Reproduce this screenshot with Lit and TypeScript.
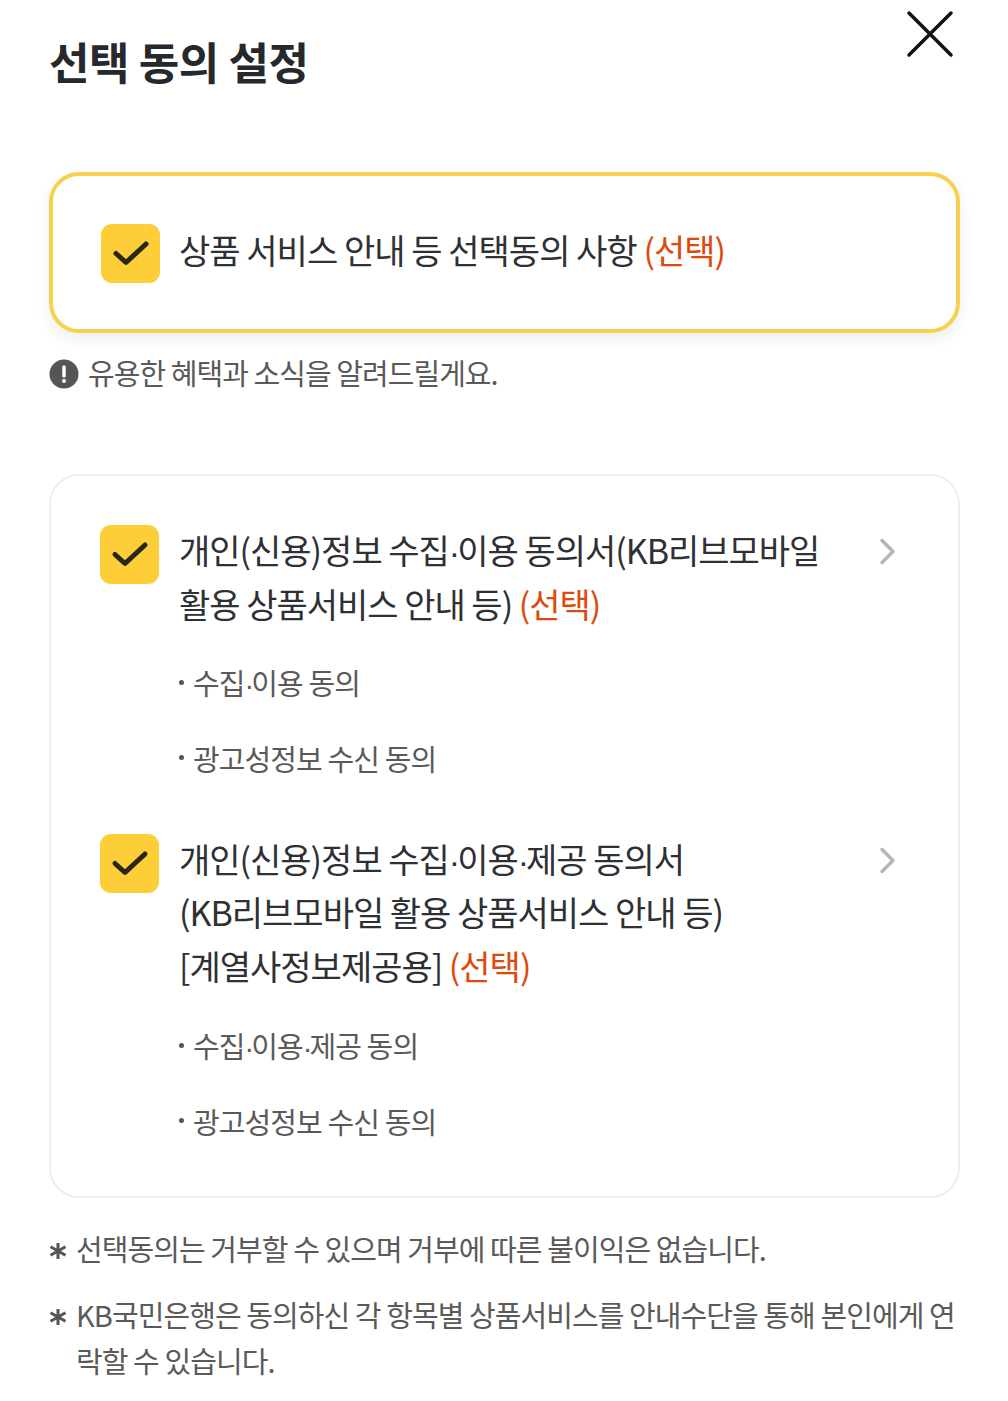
import { LitElement, html, css } from "lit";
import { customElement } from "lit/decorators.js";

const check = html`<span class="box"><svg width="59" height="59" viewBox="0 0 59 59"><path d="M15 29.500 L25 38.500 L45 20" fill="none" stroke="#2a2618" stroke-width="5" stroke-linecap="round" stroke-linejoin="round"/></svg></span>`;
const chev = html`<svg class="chev" width="20" height="30" viewBox="0 0 20 30"><path d="M4 4.500 L15 15.500 L4 26.500" fill="none" stroke="#b5b5b5" stroke-width="3.500" stroke-linecap="round" stroke-linejoin="round"/></svg>`;
const dot = html`<span class="dot">·</span>`;

@customElement("app-root")
export class AppRoot extends LitElement {
  static styles = css`
    :host { display: block; width: 1008px; height: 1401px; background: #fff; overflow: hidden; box-sizing: border-box; padding: 0 48px 0 49px; font-family: "Noto Sans CJK KR", "Noto Sans", sans-serif; color: #26282c; }
    * { box-sizing: border-box; }
    header { display: flex; justify-content: space-between; align-items: flex-start; height: 172px; }
    h1 { margin: 33px 0 0 0; font-size: 44px; line-height: 56px; font-weight: 700; letter-spacing: -0.4px; color: #26282c; }
    .close { display: block; margin: 10px 6px 0 0; }
    .card-top { height: 161px; border: 4px solid #f5d14f; border-radius: 30px; display: flex; align-items: center; padding: 0 0 6px 48px; gap: 19px; box-shadow: 0 6px 16px rgba(0,0,0,.07); }
    .card-top .box { margin-top: 8px; }
    .card-top .label { letter-spacing: -0.96px; }
    .box { flex: none; width: 59px; height: 59px; background: #fdce38; border-radius: 11px; display: block; }
    .box svg { display: block; }
    .label { font-size: 34px; line-height: 54px; letter-spacing: -1px; color: #2e3034; }
    .sel { color: #dd4a0c; }
    .dot { font-family: "Liberation Sans", sans-serif; letter-spacing: -3px; line-height: 0; }
    .notice { display: flex; align-items: center; gap: 9px; margin-top: 13px; height: 52px; font-size: 29px; letter-spacing: -0.95px; color: #5a5a5a; }
    .notice svg { margin-top: 4px; }
    .card { margin-top: 76px; height: 724px; border: 2px solid #eeeeee; border-radius: 30px; padding: 49px 60px 0 49px; }
    .row { display: flex; gap: 20px; align-items: flex-start; }
    .row .label { flex: 1; margin-top: -2px; line-height: 53.6px; }
    .chev { flex: none; margin-top: 11px; }
    ul { list-style: none; margin: 32px 0 0 79px; padding: 0; font-size: 29px; line-height: 40px; letter-spacing: -0.9px; color: #5a5a5a; }
    ul.last { margin-top: 33px; }
    li { display: flex; align-items: center; gap: 9px; height: 40px; margin-bottom: 35.500px; }
    li::before { content: ""; width: 5px; height: 5px; border-radius: 50%; background: #555; flex: none; }
    .row.second { margin-top: 56px; }
    .notes { margin: 27px 0 0 0; padding: 0; list-style: none; font-size: 29px; line-height: 46px; letter-spacing: -0.93px; color: #5a5a5a; }
    .note { display: flex; gap: 9px; margin-bottom: 20px; }
    .star { flex: none; width: 18px; margin-top: 17px; display: block; }
  `;

  render() {
    const star = html`<svg class="star" width="18" height="18" viewBox="0 0 18 18"><path d="M9 1 V17 M1.500 4.700 L16.500 13.300 M16.500 4.700 L1.500 13.300" stroke="#555" stroke-width="3" fill="none"/></svg>`;
    return html`
      <header>
        <h1>선택 동의 설정</h1>
        <svg class="close" width="48" height="48" viewBox="0 0 48 48"><path d="M3 3 L45 45 M45 3 L3 45" stroke="#111" stroke-width="3.500" stroke-linecap="round"/></svg>
      </header>
      <section class="card-top">
        ${check}
        <span class="label">상품 서비스 안내 등 선택동의 사항 <span class="sel">(선택)</span></span>
      </section>
      <div class="notice">
        <svg width="30" height="30" viewBox="0 0 30 30"><circle cx="15" cy="15" r="14.500" fill="#555"/><path d="M15 8 V17" stroke="#fff" stroke-width="3.500" stroke-linecap="round"/><circle cx="15" cy="22" r="2" fill="#fff"/></svg>
        <span>유용한 혜택과 소식을 알려드릴게요.</span>
      </div>
      <section class="card">
        <div class="row">
          ${check}
          <span class="label">개인(신용)정보 수집${dot}이용 동의서(KB리브모바일<br>활용 상품서비스 안내 등) <span class="sel">(선택)</span></span>
          ${chev}
        </div>
        <ul><li><span>수집${dot}이용 동의</span></li><li>광고성정보 수신 동의</li></ul>
        <div class="row second">
          ${check}
          <span class="label">개인(신용)정보 수집${dot}이용${dot}제공 동의서<br>(KB리브모바일 활용 상품서비스 안내 등)<br>[계열사정보제공용] <span class="sel">(선택)</span></span>
          ${chev}
        </div>
        <ul class="last"><li><span>수집${dot}이용${dot}제공 동의</span></li><li>광고성정보 수신 동의</li></ul>
      </section>
      <div class="notes">
        <div class="note">${star}<span>선택동의는 거부할 수 있으며 거부에 따른 불이익은 없습니다.</span></div>
        <div class="note">${star}<span>KB국민은행은 동의하신 각 항목별 상품서비스를 안내수단을 통해 본인에게 연락할 수 있습니다.</span></div>
      </div>
    `;
  }
}
